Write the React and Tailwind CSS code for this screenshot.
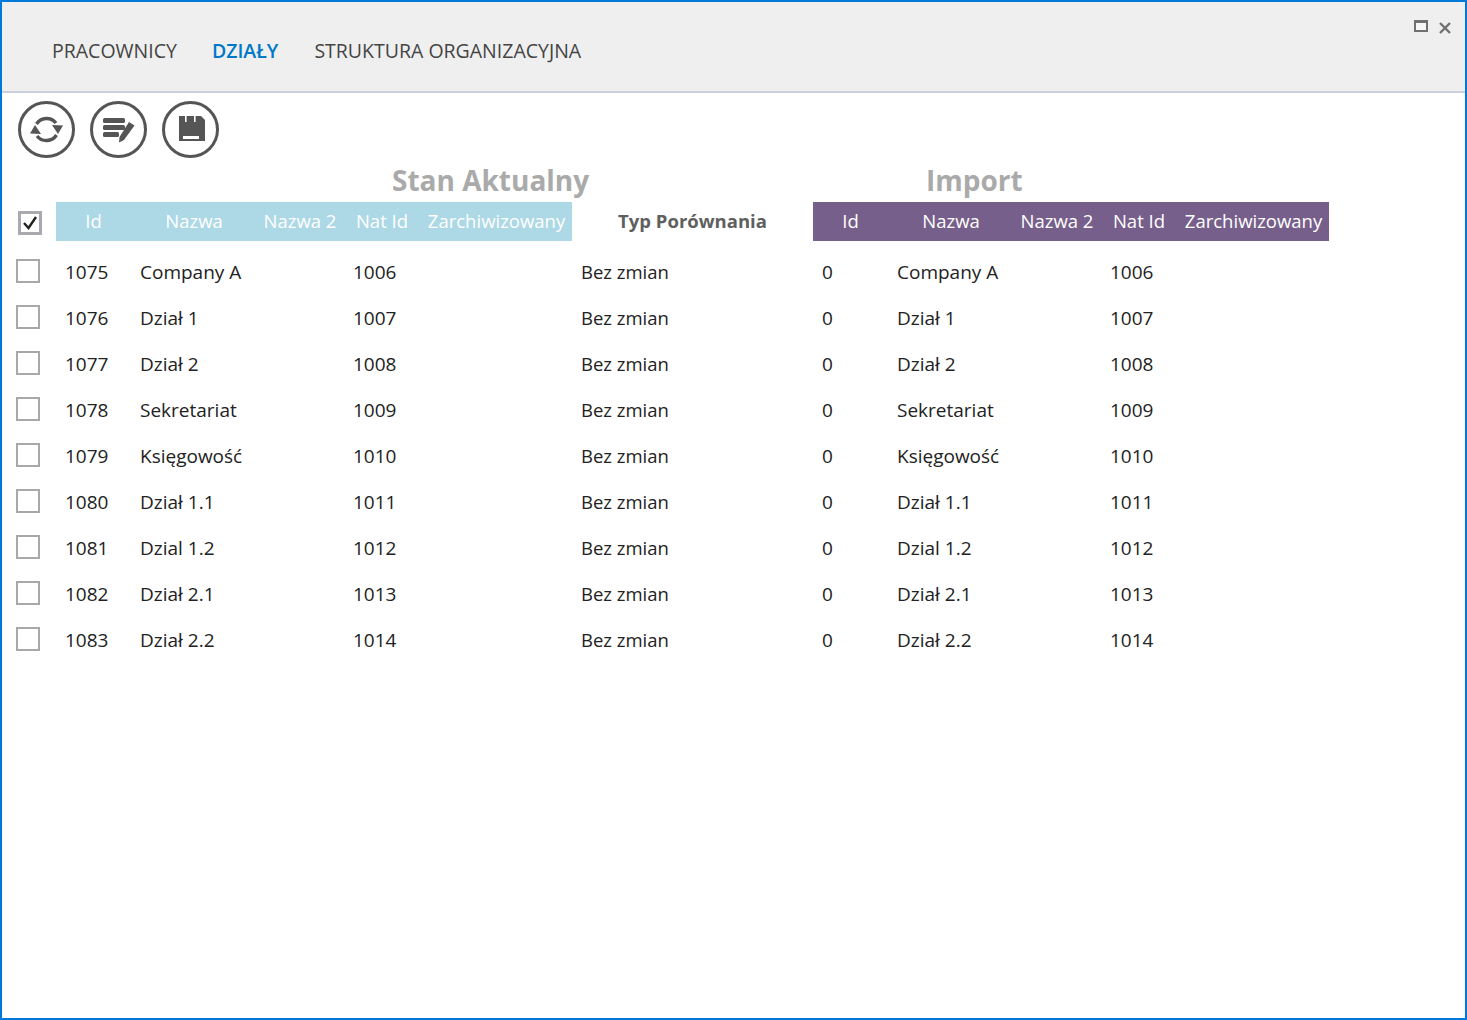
const rows = [
  ["1075", "Company A", "1006"],
  ["1076", "Dział 1", "1007"],
  ["1077", "Dział 2", "1008"],
  ["1078", "Sekretariat", "1009"],
  ["1079", "Księgowość", "1010"],
  ["1080", "Dział 1.1", "1011"],
  ["1081", "Dzial 1.2", "1012"],
  ["1082", "Dział 2.1", "1013"],
  ["1083", "Dział 2.2", "1014"],
];

const columns = [
  ["Id", "w-[75px]"],
  ["Nazwa", "w-[126px]"],
  ["Nazwa 2", "w-[86px]"],
  ["Nat Id", "w-[78px]"],
  ["Zarchiwizowany", "w-[151px]"],
];

function ColumnHeader({ color }) {
  return (
    <div className={`flex h-[39px] items-center pb-[2px] text-white ${color}`}>
      {columns.map(([label, width]) => (
        <div key={label} className={`text-center ${width}`}>{label}</div>
      ))}
    </div>
  );
}

function RowCells({ id, name, natId }) {
  return (
    <div className="flex text-[19px]">
      <div className="w-[75px] pl-[9px]">{id}</div>
      <div className="w-[126px] pl-[9px]">{name}</div>
      <div className="w-[86px]" />
      <div className="w-[78px] pl-[10px]">{natId}</div>
      <div className="w-[151px]" />
    </div>
  );
}

function RoundButton({ children }) {
  return (
    <button className="flex h-[57px] w-[57px] items-center justify-center rounded-full border-[3px] border-[#555555] bg-white text-[#555555]">
      {children}
    </button>
  );
}

export default function App() {
  return (
    <div
      className="flex h-[1020px] w-[1467px] flex-col border-2 border-[#0078d7] bg-white text-[18.5px] text-[#222222]"
      style={{ fontFamily: '"Open Sans", "Noto Sans", sans-serif' }}
    >
      {/* Tabs */}
      <div className="flex h-[91px] shrink-0 justify-between border-b-2 border-[#ccd0dc] bg-[#efefef]">
        <div className="flex gap-[35px] pl-[50px] pt-[35px] text-[19.5px] leading-[28px] text-[#444444]">
          <span>PRACOWNICY</span>
          <span className="font-semibold text-[#0078c8]">DZIAŁY</span>
          <span className="pl-[1px]">STRUKTURA ORGANIZACYJNA</span>
        </div>
        <div className="flex items-start gap-[11px] pr-[14px] pt-[18px]">
          <div className="h-[12px] w-[14px] border-2 border-t-[3px] border-[#707070] bg-[#f7f7f7]" />
          <svg width="12" height="12" viewBox="0 0 12 12" className="mt-[2px]">
            <path d="M1 1 L11 11 M11 1 L1 11" stroke="#707070" strokeWidth="2.4" />
          </svg>
        </div>
      </div>

      {/* Toolbar */}
      <div className="flex gap-[15px] pl-[16px] pt-[8px]">
        <RoundButton>
          <svg width="33" height="33" viewBox="0 0 33 33" fill="currentColor">
            <path d="M6.5 11 A12 12 0 0 1 26 10" fill="none" stroke="currentColor" strokeWidth="3.4" />
            <path d="M26.5 22 A12 12 0 0 1 7 23" fill="none" stroke="currentColor" strokeWidth="3.4" />
            <path d="M22 12 L33 12.5 L28 21 Z" />
            <path d="M11 21 L0 20.5 L5 12 Z" />
          </svg>
        </RoundButton>
        <RoundButton>
          <svg width="33" height="33" viewBox="0 0 33 33" fill="currentColor">
            <rect x="1" y="5" width="22" height="5" rx="1.5" />
            <rect x="1" y="12" width="22" height="5" rx="1.5" />
            <rect x="1" y="19" width="16" height="5" rx="1.5" />
            <path d="M27 9 L32.5 12.5 L22 27 L17 29.5 L17.5 24 Z" />
          </svg>
        </RoundButton>
        <RoundButton>
          <svg width="33" height="33" viewBox="0 0 33 33">
            <path d="M5 3 H27 L31 7 V28 H5 Z" fill="currentColor" />
            <rect x="11" y="3" width="1.6" height="6" fill="#ffffff" />
            <rect x="20" y="3" width="1.6" height="6" fill="#ffffff" />
            <rect x="9" y="23" width="16" height="3" fill="#ffffff" />
          </svg>
        </RoundButton>
      </div>

      {/* Section titles */}
      <div className="flex h-[44px] items-end pb-[3px] text-[28px] font-bold leading-[38px] text-[#aaaaaa]">
        <div className="w-[588px] pl-[390px]">Stan Aktualny</div>
        <div className="pl-[336px]">Import</div>
      </div>

      {/* Table header */}
      <div className="flex items-center">
        <div className="w-[54px] pl-[16px]">
          <div className="mt-[2px] flex h-[24px] w-[24px] items-center justify-center border-[3px] border-[#a9a9b0]">
            <svg width="16" height="16" viewBox="0 0 16 16">
              <path d="M2 8 L6.5 13 L14 2" fill="none" stroke="#222222" strokeWidth="2.4" />
            </svg>
          </div>
        </div>
        <ColumnHeader color="bg-[#add8e6]" />
        <div className="w-[241px] pb-[2px] text-center font-bold text-[#5f5f5f]">Typ Porównania</div>
        <ColumnHeader color="bg-[#775f8b]" />
      </div>

      {/* Rows */}
      <div className="flex flex-col pt-[8px]">
        {rows.map(([id, name, natId]) => (
          <div key={id} className="flex h-[46px] items-center">
            <div className="w-[54px] pl-[14px]">
              <div className="mb-[2px] h-[24px] w-[24px] border-2 border-[#a9a9a9]" />
            </div>
            <RowCells id={id} name={name} natId={natId} />
            <div className="w-[241px] pl-[9px]">Bez zmian</div>
            <RowCells id="0" name={name} natId={natId} />
          </div>
        ))}
      </div>
    </div>
  );
}
